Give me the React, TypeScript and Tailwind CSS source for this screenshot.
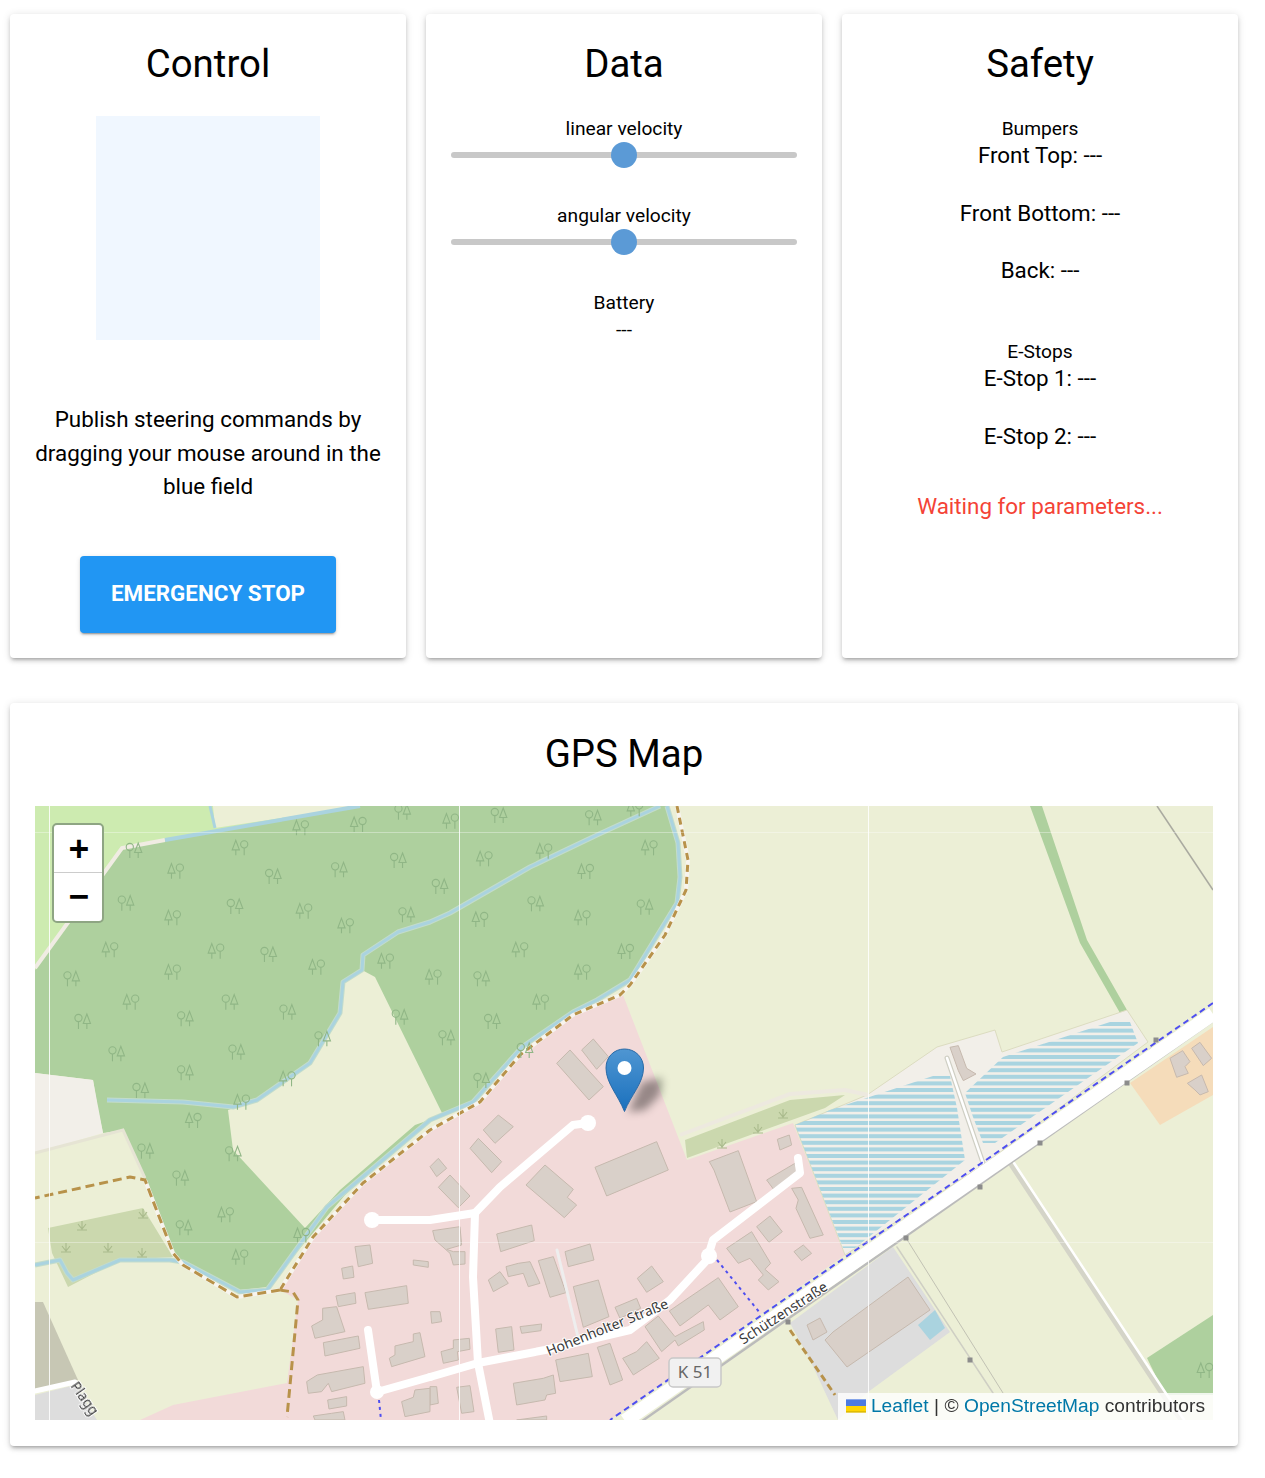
const trees: [number, number, number, number, number][] = [
  // origin x, origin y, zoomed x, zoomed y, variant (0 = cone first, 1 = round first)
  ...([[812,82,0],[985,72,0],[1118,35,1],[630,142,0],[437,212,0],[730,228,1],[928,208,1],[1105,180,1],[288,308,1],[428,352,0],[615,318,1],[822,332,0],[947,376,0],[1130,343,1],[240,448,0],[558,452,0],[716,462,1],[860,500,0],[1067,482,0],[125,535,1],[428,515,0],[303,605,0],[600,605,1],[773,635,1],[158,663,1],[466,655,1],[1110,650,1],[260,760,1],[620,755,1],[878,715,1],[466,817,1],[772,835,0],[332,870,1],[635,905,0],[312,150,1]].map(([x, y, v]) => [30, 800, x, y, v]) as [number, number, number, number, number][]),
  ...([[62,62,0],[207,45,1],[490,52,1],[615,25,0],[163,175,0],[342,152,0],[658,142,0],[467,213,0],[30,258,1],[317,310,1],[645,320,1],[150,357,0],[457,352,0],[270,448,0],[587,453,0],[10,530,0],[155,535,1],[457,515,0],[332,605,0],[187,663,1],[50,712,1],[155,840,1],[285,750,1]].map(([x, y, v]) => [430, 800, x, y, v]) as [number, number, number, number, number][]),
  ...([[490,30,0],[347,122,1],[452,203,1],[610,130,1],[587,313,0],[462,352,1],[630,440,0],[815,375,0]].map(([x, y, v]) => [30, 1110, x, y, v]) as [number, number, number, number, number][]),
  [830, 1110, 1125, 780, 0],
];

const grass = [[143, 1213], [82, 1225], [66, 1247], [108, 1247], [142, 1252], [783, 1113], [758, 1128], [722, 1143]];

const buildingsCentre = [
  "205,15 250,50 195,100 160,60", "145,85 215,155 185,188 120,115", "25,145 50,175 20,200 0,170", "60,195 120,258 85,293 25,232",
  "345,165 430,238 412,262 440,285 403,323 288,225", "680,95 715,180 530,258 495,172", "925,122 980,275 900,306 852,180 838,155",
  "1042,88 1078,75 1085,105 1050,120", "1095,160 1100,190 1030,237 1010,210", "1085,235 1115,232 1180,375 1140,385 1098,295 1105,270",
  "1020,318 1057,365 1017,397 980,350", "1120,405 1145,430 1115,452 1092,425", "965,365 1022,460 1005,478 1047,515 1015,540 985,510 1000,495 960,445 925,460 890,415",
  "865,503 925,590 870,630 835,585 750,648 718,603", "685,618 735,680 820,635 823,660 745,708 735,690 695,725 645,650",
  "665,468 700,515 650,547 622,505", "620,565 632,595 570,625 555,592", "505,510 537,620 460,652 430,530", "480,402 492,450 415,470 405,425",
  "305,345 313,392 212,425 200,372", "370,440 408,548 360,562 325,452", "300,455 330,520 295,530 280,490 235,500 228,470 265,460",
  "210,485 235,520 190,545 175,510", "90,350 95,405 50,418 70,425 105,425 105,462 70,465 60,430 15,390 8,362", "335,642 333,662 275,670 270,650",
  "245,650 252,720 205,727 197,657", "30,605 35,635 5,640 2,605", "118,685 120,718 82,725 85,750 40,760 33,725 70,715 70,690",
  "475,730 487,800 390,815 377,750", "540,700 578,810 540,825 502,712", "650,695 688,745 610,795 578,745 620,725",
  "370,795 377,850 350,855 345,870 260,885 250,820 340,805", "120,827 132,905 95,910 80,832", "20,830 25,880 0,885 0,830", "350,918 350,930 260,930",
];
const buildingsWest = [
  "1020,405 1028,460 985,470 975,410", "935,475 968,468 972,502 940,507", "1150,450 1195,455 1195,472 1150,465", "1130,527 1135,580 1015,598 1005,548",
  "975,548 978,580 925,590 918,558", "920,590 945,665 855,685 845,648 878,630 878,595", "985,678 990,715 885,738 880,698",
  "1170,668 1185,740 1085,770 1078,745 1095,735 1095,708 1150,695 1150,672", "1000,770 1005,820 905,845 895,820 875,845 835,850 830,815 862,795",
  "950,860 950,888 897,897 893,870", "940,905 945,930 855,930 850,918 905,910", "1200,835 1200,905 1125,920 1115,875 1150,862 1155,840",
];
const buildingsNorth = ["490,717 535,770 500,808 455,750", "420,750 520,860 477,900 380,790"];
const buildingsEast = [
  "360,742 385,737 410,805 438,822 400,842 385,812", "1020,775 1058,752 1080,785 1065,800 1075,820 1040,832",
  "1085,745 1110,727 1145,775 1120,797", "1072,850 1115,825 1135,875 1110,885 1095,870",
];

const stripeRows = Array.from({ length: 36 }, (_, i) => 1022 + i * 6.6);

const streamA = "660,806 597,835 530,867 450,913 430,922 398,932 363,955 362,970 343,982 340,1013 310,1063 257,1100 233,1107 183,1102 107,1100";
const streamB = "667,806 678,843 680,877 677,903 630,980 597,1000 573,1012 522,1047 473,1102 430,1120 327,1207 267,1290 240,1292 183,1262 170,1260 120,1260 73,1280 67,1273 60,1260 35,1265";
const borderA = "677,806 688,860 686,890 665,935 630,985 620,995 573,1015 520,1055 480,1102 430,1130 363,1183 313,1237 280,1290";
const borderB = "280,1290 237,1297 183,1265 173,1253 145,1180";

function Building({ points }: { points: string }) {
  return <polygon points={points} fill="#d9d0c9" stroke="#c6b9ae" strokeWidth="3" />;
}

function MapDrawing() {
  return (
    <svg viewBox="35 806 1178 614" width="1178" height="614" className="block">
      <defs>
        <clipPath id="stripes">
          <polygon points="933,1076 950,1076 957,1108 965,1160 855,1248 843,1248 795,1125 830,1110" />
          <polygon points="1110,1022 1130,1022 1138,1043 995,1143 983,1143 973,1117 965,1093 1003,1057" />
        </clipPath>
        <linearGradient id="pin" x1="0" y1="0" x2="0" y2="1">
          <stop offset="0" stopColor="#4f96d2" />
          <stop offset="1" stopColor="#1a70bd" />
        </linearGradient>
        <filter id="pinShadow" x="-50%" y="-50%" width="200%" height="200%"><feGaussianBlur stdDeviation="4" /></filter>
      </defs>

      <g className="blur-[0.5px]">
        <rect x="35" y="806" width="1178" height="614" fill="#ecefd6" />

        {/* land use */}
        <polygon points="35,806 360,806 165,840 122,848 35,970" fill="#cdebb0" />
        <polygon points="213,806 360,806 215,828" fill="#ecefd6" />
        <polygon points="35,970 122,848 165,840 360,806 667,806 678,843 680,877 677,903 630,980 573,1012 522,1047 473,1102 430,1117 345,1195 313,1233 267,1287 240,1290 183,1267 173,1253 145,1178 123,1130 103,1133 98,1110 93,1080 35,1073" fill="#aed09e" />
        <polyline points="35,968 122,848 165,840" fill="none" stroke="#f0ece3" strokeWidth="4" />
        <polygon points="343,982 362,970 375,977 443,1115 415,1125 340,1190 305,1228 233,1150 228,1110 257,1100 310,1063 340,1013" fill="#ecefd6" />
        <polygon points="35,1073 93,1080 103,1133 35,1153" fill="#f2efe9" />
        <polyline points="35,1153 123,1130 145,1178" fill="none" stroke="#e6e4d4" strokeWidth="3" />
        <polygon points="48,1228 143,1208 173,1257 120,1260 68,1287 52,1253" fill="#cbd8ae" />
        <polygon points="35,1302 43,1302 78,1380 35,1392" fill="#c7c7b4" />
        <polygon points="35,1395 75,1385 97,1420 35,1420" fill="#dddddd" />
        <polygon points="1030,806 1042,806 1087,940 1127,1010 1120,1013 1080,943" fill="#aed09e" />
        <polygon points="623,995 687,1160 793,1123 845,1255 610,1420 140,1420 173,1405 287,1383 298,1300 280,1290 313,1237 363,1183 430,1130 480,1102 520,1055 573,1015" fill="#f2dad9" />
        <polygon points="795,1125 867,1095 937,1047 995,1030 1002,1052 1127,1010 1148,1042 983,1165 845,1255" fill="#f2efe9" stroke="#dcdcc0" strokeWidth="1" />
        <polygon points="685,1140 790,1100 845,1095 825,1108 687,1158" fill="#cbd8ae" />
        <polyline points="680,1135 790,1094 845,1090 868,1095" fill="none" stroke="#ede9df" strokeWidth="4" />
        <polygon points="1130,1083 1213,1027 1213,1095 1160,1125" fill="#f5dcba" />
        <polygon points="790,1323 893,1247 950,1332 868,1392 838,1420 810,1360" fill="#dddddd" />
        <polygon points="1147,1358 1213,1315 1213,1395 1165,1395" fill="#aed09e" />
        <polyline points="1157,806 1213,890" fill="none" stroke="#aaaaa0" strokeWidth="1.5" />

        <g clipPath="url(#stripes)">
          {stripeRows.map((y) => (
            <rect key={y} x="790" y={y} width="360" height="4" fill="#a9d4e0" />
          ))}
        </g>

        {/* water */}
        <g fill="none" strokeLinejoin="round">
          <polyline points="165,840 360,806" stroke="#aad3df" strokeWidth="4" />
          <polyline points="210,806 215,828" stroke="#aad3df" strokeWidth="3" />
          <polyline points={streamA} stroke="#c3dccb" strokeWidth="5" />
          <polyline points={streamB} stroke="#c3dccb" strokeWidth="5" />
          <polyline points={streamA} stroke="#aad3df" strokeWidth="3" />
          <polyline points={streamB} stroke="#aad3df" strokeWidth="3" />
        </g>

        {/* boundaries */}
        <g fill="none" strokeLinejoin="round">
          <polyline points={borderA} stroke="#f7f4ee" strokeWidth="4" />
          <polyline points={borderA} stroke="#b8924a" strokeWidth="3" strokeDasharray="7 5" />
          <polyline points="280,1290 293,1292 298,1300 287,1417" stroke="#b8924a" strokeWidth="3" strokeDasharray="9 5" />
          <polyline points={borderB} stroke="#f7f4ee" strokeWidth="4" />
          <polyline points={`${borderB} 130,1177 35,1198`} stroke="#b8924a" strokeWidth="3" strokeDasharray="9 5" />
          <polyline points="790,1330 835,1395" stroke="#b8924a" strokeWidth="3" strokeDasharray="7 4" />
        </g>

        {/* buildings */}
        <g transform="translate(430 1110) scale(0.3333)">{buildingsCentre.map((p) => <Building key={p} points={p} />)}</g>
        <g transform="translate(30 1110) scale(0.3333)">{buildingsWest.map((p) => <Building key={p} points={p} />)}</g>
        <g transform="translate(430 800) scale(0.3333)">{buildingsNorth.map((p) => <Building key={p} points={p} />)}</g>
        <g transform="translate(830 800) scale(0.3333)">{buildingsEast.map((p) => <Building key={p} points={p} />)}</g>
        <polygon points="908,1277 930,1310 847,1367 825,1340 833,1332" fill="#d9d0c9" stroke="#c6b9ae" />
        <polygon points="807,1325 820,1318 827,1332 813,1340" fill="#d9d0c9" stroke="#c6b9ae" />
        <polygon points="918,1325 935,1310 945,1328 930,1340" fill="#aad3df" />

        {/* roads */}
        <g fill="none" stroke="#ffffff" strokeLinecap="round" strokeLinejoin="round">
          <polyline points="588,1123 573,1125 500,1187 475,1213 430,1220 372,1220" strokeWidth="8" />
          <polyline points="475,1213 473,1277 478,1363 490,1424" strokeWidth="8" />
          <polyline points="430,1377 478,1363 545,1350 630,1330 670,1300 707,1260 713,1240 800,1173 798,1158" strokeWidth="8" />
          <polyline points="430,1377 377,1392 368,1330" strokeWidth="8" />
          <polyline points="35,1391 75,1382" strokeWidth="5" />
          <polyline points="557,1250 578,1337" stroke="#eeeeee" strokeWidth="3" />
        </g>
        <circle cx="588" cy="1123" r="8" fill="#ffffff" />
        <circle cx="372" cy="1220" r="8" fill="#ffffff" />
        <circle cx="377" cy="1392" r="7" fill="#ffffff" />
        <circle cx="709" cy="1256" r="8" fill="#ffffff" />

        {/* tracks */}
        <g fill="none" strokeLinecap="round">
          <polyline points="1012,1165 1165,1397 1185,1424" stroke="#d4d4c8" strokeWidth="6" />
          <polyline points="1014,1163 1167,1395 1187,1424" stroke="#ffffff" strokeWidth="2.5" />
          <polyline points="947,1058 983,1163" stroke="#cfcfc4" strokeWidth="5" />
          <polyline points="947,1058 983,1163" stroke="#ffffff" strokeWidth="2.5" />
          <polyline points="897,1247 993,1393" stroke="#cfcfc4" strokeWidth="1.5" />
          <polyline points="906,1238 1003,1393" stroke="#c2c2b4" strokeWidth="1" />
          <polyline points="1156,1040 1127,1083" stroke="#d4d4c8" strokeWidth="1" />
        </g>
        <polyline points="1213,1021 625,1433" fill="none" stroke="#bbbbbb" strokeWidth="2.5" />
        <polyline points="1213,1014 625,1421" fill="none" stroke="#ffffff" strokeWidth="14" />
        <polyline points="1213,1003 610,1420" fill="none" stroke="#4e4ef0" strokeWidth="2" strokeDasharray="6 4" />
        <polyline points="717,1260 760,1313" fill="none" stroke="#4e4ef0" strokeWidth="2" strokeDasharray="3 4" />
        <polyline points="379,1400 381,1420" fill="none" stroke="#4e4ef0" strokeWidth="2" strokeDasharray="3 4" />
        {[[1156, 1040], [1127, 1083], [1040, 1143], [980, 1187], [906, 1238], [970, 1360], [788, 1322]].map(([x, y]) => (
          <rect key={x} x={x - 2.5} y={y - 2.5} width="5" height="5" fill="#8c8c8c" />
        ))}

        {/* forest and wetland symbols */}
        <g fill="none" stroke="#90b686" strokeWidth="1.1">
          {trees.map(([ox, oy, zx, zy, v]) => {
            const x = ox + zx / 3;
            const y = oy + zy / 3;
            const round = v === 1 ? x - 4.2 : x + 4.2;
            const cone = v === 1 ? x + 4.2 : x - 4.2;
            return (
              <g key={`${ox}-${oy}-${zx}-${zy}`}>
                <circle cx={round} cy={y - 3} r="3.6" />
                <path d={`M${round} ${y + 0.6}V${y + 8}`} />
                <path d={`M${cone} ${y - 7}L${cone + 3.6} ${y + 2.5}H${cone - 3.6}ZM${cone} ${y + 2.5}V${y + 8}`} />
              </g>
            );
          })}
          {grass.map(([x, y]) => (
            <path key={`${x}-${y}`} d={`M${x} ${y + 5}V${y - 4}M${x - 5} ${y + 5}H${x + 5}M${x - 4} ${y - 1}L${x} ${y + 4}L${x + 4} ${y - 1}`} stroke="#a9ba8c" />
          ))}
        </g>

        {/* labels */}
        <g fontFamily="'Noto Sans', sans-serif" fontSize="14" fill="#3a3a3a" stroke="#ffffff" strokeWidth="2" paintOrder="stroke" strokeLinejoin="round">
          <text x="609" y="1332" textAnchor="middle" transform="rotate(-22 609 1332)">Hohenholter Straße</text>
          <text x="786" y="1317" textAnchor="middle" transform="rotate(-33 786 1317)">Schützenstraße</text>
          <text x="70" y="1386" transform="rotate(55 70 1386)">Plagg</text>
        </g>
        <rect x="669" y="1358" width="52" height="29" rx="4" fill="#f1f1f1" stroke="#c8c8c8" strokeWidth="1.5" />
        <text x="695" y="1378" textAnchor="middle" fontFamily="'Noto Sans', sans-serif" fontSize="17" fill="#666666">K 51</text>
      </g>

      {/* tile seams */}
      <g stroke="#ffffff" shapeRendering="crispEdges">
        <path d="M49.5 806V1420M459.5 806V1420M868.5 806V1420" strokeOpacity="0.85" />
        <path d="M35 832.5H1213M35 1242.5H1213" strokeOpacity="0.35" />
      </g>

      {/* marker */}
      <polygon points="628,1112 642,1082 662,1078 660,1095 645,1110" fill="#000000" fillOpacity="0.38" filter="url(#pinShadow)" />
      <path d="M624.5 1111.5C618 1095 606 1083 606 1068C606 1057 614 1049 624.5 1049C635 1049 643.5 1057 643.5 1068C643.5 1083 631 1095 624.5 1111.5Z" fill="url(#pin)" stroke="#2a6aa6" strokeWidth="1" />
      <circle cx="624.5" cy="1068" r="7" fill="#ffffff" />
    </svg>
  );
}

const cardShadow = "shadow-[0_3px_3px_-2px_rgba(0,0,0,0.2),0_3px_4px_0_rgba(0,0,0,0.14),0_1px_8px_0_rgba(0,0,0,0.12)]";

function Card({ title, children }: { title: string; children: React.ReactNode }) {
  return (
    <div className={`h-[644px] rounded bg-white px-[25px] pt-[28px] ${cardShadow}`}>
      <h2 className="text-center text-[38.4px] leading-[44px] text-black">{title}</h2>
      {children}
    </div>
  );
}

function Slider({ label }: { label: string }) {
  return (
    <div className="flex flex-col items-center">
      <span className="text-[19.2px] leading-[27px]">{label}</span>
      <div className="relative h-[27px] w-full">
        <div className="absolute inset-x-0 top-[10px] h-[6px] rounded-full bg-[#c8c8c8]" />
        <div className="absolute left-1/2 top-0 h-[26px] w-[26px] -translate-x-1/2 rounded-full bg-[#5b9ad6]" />
      </div>
    </div>
  );
}

export default function App() {
  return (
    <div className="w-[1238px] pb-8 pl-[10px] pt-[14px] font-['Roboto',sans-serif] text-black">
      <div className="grid grid-cols-3 gap-5">
        <Card title="Control">
          <div className="mx-auto mt-[30px] h-[224px] w-[224px] bg-[#f0f7ff]" />
          <p className="mt-[63px] text-center text-[22.4px] leading-[33.6px]">
            Publish steering commands by dragging your mouse around in the blue field
          </p>
          <button className="mx-auto mt-[52px] block h-[77px] w-[256px] rounded bg-[#2196f3] text-[22.4px] font-bold uppercase text-white shadow-[0_3px_1px_-2px_rgba(0,0,0,0.2),0_2px_2px_0_rgba(0,0,0,0.14),0_1px_5px_0_rgba(0,0,0,0.12)]">
            Emergency Stop
          </button>
        </Card>
        <Card title="Data">
          <div className="mt-[29px] flex flex-col gap-[33px]">
            <Slider label="linear velocity" />
            <Slider label="angular velocity" />
          </div>
          <div className="mt-[33px] text-center text-[19.2px] leading-[27px]">
            <div>Battery</div>
            <div>---</div>
          </div>
        </Card>
        <Card title="Safety">
          <div className="mt-[29px] text-center">
            <div className="text-[19.2px] leading-[27px]">Bumpers</div>
            <div className="text-[22.4px] leading-[27px]">Front Top: ---</div>
            <div className="mt-[31px] text-[22.4px] leading-[27px]">Front Bottom: ---</div>
            <div className="mt-[30px] text-[22.4px] leading-[27px]">Back: ---</div>
            <div className="mt-[54px] text-[19.2px] leading-[27px]">E-Stops</div>
            <div className="text-[22.4px] leading-[27px]">E-Stop 1: ---</div>
            <div className="mt-[31px] text-[22.4px] leading-[27px]">E-Stop 2: ---</div>
            <div className="mt-[43px] text-[22.4px] leading-[27px] text-[#f44336]">Waiting for parameters...</div>
          </div>
        </Card>
      </div>

      <div className={`mt-[45px] rounded bg-white px-[25px] pb-[26px] pt-[29px] ${cardShadow}`}>
        <h2 className="text-center text-[38.4px] leading-[44px]">GPS Map</h2>
        <div className="relative mt-[30px] h-[614px] overflow-hidden">
          <MapDrawing />
          <div className="absolute left-[17px] top-[17px] w-[52px] rounded-[5px] border-[2px] border-[#8ea583] bg-white">
            <div className="flex h-[48px] items-center justify-center border-b border-[#cccccc] pl-[2px] font-['DejaVu_Sans_Mono',monospace] text-[33px] font-bold leading-none">+</div>
            <div className="flex h-[48px] items-center justify-center pb-[3px] pl-[2px] font-['DejaVu_Sans_Mono',monospace] text-[33px] font-bold leading-none">−</div>
          </div>
          <div className="absolute bottom-0 right-0 flex h-[27px] items-center bg-white/80 px-[8px] pb-[1px] font-['Liberation_Sans',sans-serif] text-[19.2px] text-[#333333]">
            <svg viewBox="0 0 12 8" width="20" height="14" className="mr-[5px]">
              <path fill="#4C7BE1" d="M0 0h12v4H0z" />
              <path fill="#FFD500" d="M0 4h12v3H0z" />
              <path fill="#E0BC00" d="M0 7h12v1H0z" />
            </svg>
            <span className="text-[#0078a8]">Leaflet</span>
            <span className="mx-[5.5px]">|</span>
            <span>©&nbsp;</span>
            <span className="text-[#0078a8]">OpenStreetMap</span>
            <span>&nbsp;contributors</span>
          </div>
        </div>
      </div>
    </div>
  );
}
